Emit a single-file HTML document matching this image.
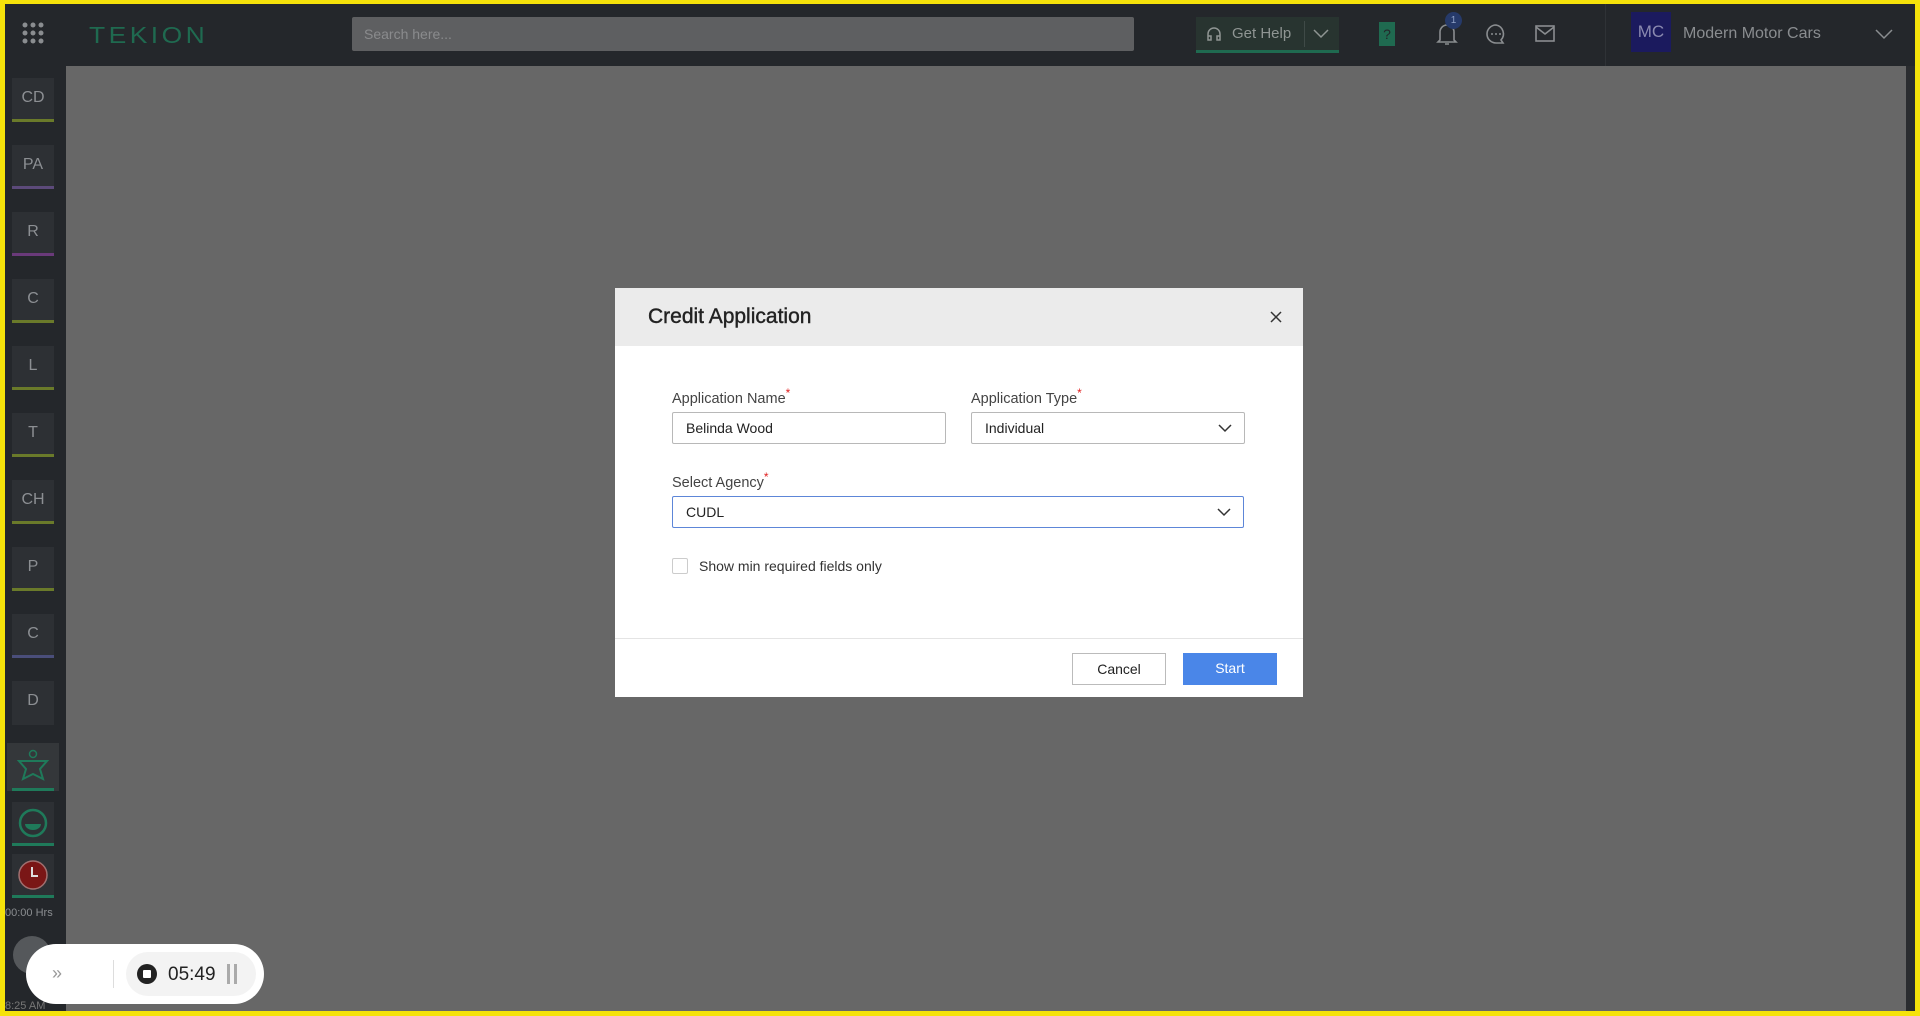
<!DOCTYPE html>
<html><head><meta charset="utf-8"><style>
*{box-sizing:border-box;margin:0;padding:0}
body{width:1920px;height:1016px;overflow:hidden;background:#f5e20a;font-family:"Liberation Sans",sans-serif;position:relative}
#app{position:absolute;left:5px;top:4px;right:5px;bottom:5px;background:#676767;overflow:hidden}
#top{position:absolute;left:0;top:0;right:0;height:62px;background:#24272b}
#side{position:absolute;left:0;top:62px;width:61px;bottom:0;background:#24272b}
.sb{position:absolute;left:7px;width:42px;height:44px;background:#2d3034;color:#8c8f93;font-size:16px;text-align:center;line-height:40px}
.sb i{position:absolute;left:0;right:0;bottom:0;height:3px}
#dlg{position:absolute;left:610px;top:284px;width:688px;height:409px;background:#fff}
#hd{height:58px;background:#ebebeb;padding-left:33px;font-size:21px;line-height:58px;color:#222;-webkit-text-stroke:0.4px #222}
.lbl{position:absolute;font-size:14px;color:#444}
.lbl b{color:#e02020;font-weight:normal;position:relative;top:-6px;font-size:12px}
.inp{position:absolute;height:32px;border:1px solid #b8b8b8;border-radius:2px;font-size:14px;color:#222;line-height:30px;padding-left:13px}
.chev{position:absolute;right:12px;top:10px}
.btn{position:absolute;height:32px;font-size:14px;text-align:center;line-height:30px}
</style></head><body>
<div id="app">
<div id="top">
 <svg style="position:absolute;left:17px;top:18px" width="22" height="22"><g fill="#8a8d90"><circle cx="3" cy="3" r="2.5"/><circle cx="11" cy="3" r="2.5"/><circle cx="19" cy="3" r="2.5"/><circle cx="3" cy="11" r="2.5"/><circle cx="11" cy="11" r="2.5"/><circle cx="19" cy="11" r="2.5"/><circle cx="3" cy="19" r="2.5"/><circle cx="11" cy="19" r="2.5"/><circle cx="19" cy="19" r="2.5"/></g></svg>
 <div style="position:absolute;left:84px;top:18px;font-size:23px;color:#1f6a50;letter-spacing:3px;transform:scaleX(1.15);transform-origin:left">TEKION</div>
 <div style="position:absolute;left:347px;top:13px;width:782px;height:34px;background:#5e5f61;border-radius:2px;color:#8a8b8d;font-size:14px;line-height:34px;padding-left:12px">Search here...</div>
 <div style="position:absolute;left:1191px;top:13px;width:143px;height:36px;background:#283430;border-bottom:3px solid #1f6a50;color:#8f9593;font-size:15px;line-height:34px;padding-left:36px">Get Help<span style="position:absolute;left:108px;top:4px;width:1px;height:26px;background:#3f4a47"></span>
  <svg style="position:absolute;left:10px;top:9px" width="16" height="16"><path d="M2 10V8a6 6 0 0112 0v2M2 10h3v4H2zM11 10h3v4h-3z" fill="none" stroke="#8f9593" stroke-width="1.5"/></svg>
  <svg style="position:absolute;left:117px;top:11px" width="16" height="12"><path d="M1 2l7 7 7-7" fill="none" stroke="#8f9593" stroke-width="1.5"/></svg></div>
 <div style="position:absolute;left:1374px;top:18px;width:16px;height:24px;background:#1f6a50;color:#24272b;font-size:14px;text-align:center;line-height:24px">?</div>
 <svg style="position:absolute;left:1431px;top:17px" width="22" height="26"><path d="M4 19V11a7 7 0 0114 0v8l2 2H2zM9 23h4" fill="none" stroke="#8a8d90" stroke-width="1.6"/></svg>
 <div style="position:absolute;left:1440px;top:8px;width:17px;height:17px;border-radius:50%;background:#263a6a;color:#8ea0c6;font-size:10px;text-align:center;line-height:17px">1</div>
 <svg style="position:absolute;left:1480px;top:19px" width="22" height="22"><path d="M11 2a9 9 0 100 18h0 7l-2-3a9 9 0 00-5-15z" fill="none" stroke="#8a8d90" stroke-width="1.6"/><circle cx="7" cy="11" r="1" fill="#8a8d90"/><circle cx="11" cy="11" r="1" fill="#8a8d90"/><circle cx="15" cy="11" r="1" fill="#8a8d90"/></svg>
 <svg style="position:absolute;left:1530px;top:21px" width="20" height="18"><rect x="1" y="1" width="18" height="15" fill="none" stroke="#8a8d90" stroke-width="1.6"/><path d="M1 2l9 7 9-7" fill="none" stroke="#8a8d90" stroke-width="1.6"/></svg>
 <div style="position:absolute;left:1600px;top:0;width:1px;height:62px;background:#2f3236"></div>
 <div style="position:absolute;left:1626px;top:8px;width:40px;height:40px;background:#1b1a5e;color:#8b8ab0;font-size:17px;text-align:center;line-height:40px">MC</div>
 <div style="position:absolute;left:1678px;top:21px;font-size:16px;color:#8a8d90">Modern Motor Cars</div>
 <svg style="position:absolute;left:1870px;top:24px" width="18" height="12"><path d="M1 2l8 8 8-8" fill="none" stroke="#8a8d90" stroke-width="1.5"/></svg>
 <div style="position:absolute;right:0;top:0;width:8px;height:1016px;background:#24272b"></div>
</div>
<div style="position:absolute;right:0;top:62px;width:9px;bottom:0;background:#2a2c2f"></div>
<div id="side">
 <div class="sb" style="top:12px">CD<i style="background:#6a7a2a"></i></div>
 <div class="sb" style="top:79px">PA<i style="background:#5c4a7a"></i></div>
 <div class="sb" style="top:146px">R<i style="background:#6a3a7a"></i></div>
 <div class="sb" style="top:213px">C<i style="background:#6a7a2a"></i></div>
 <div class="sb" style="top:280px">L<i style="background:#6a7a2a"></i></div>
 <div class="sb" style="top:347px">T<i style="background:#6a7a2a"></i></div>
 <div class="sb" style="top:414px">CH<i style="background:#6a7a2a"></i></div>
 <div class="sb" style="top:481px">P<i style="background:#6a7a2a"></i></div>
 <div class="sb" style="top:548px">C<i style="background:#4a4e7a"></i></div>
 <div class="sb" style="top:615px">D</div>
 <div class="sb" style="top:677px;left:2px;width:52px;height:48px;background:#34373a"><svg width="36" height="36" style="margin-top:6px"><circle cx="18" cy="5" r="3.5" fill="none" stroke="#1f7a5a" stroke-width="1.5"/><path d="M4 12h28l-7 8 3 10-10-5-10 5 3-10z" fill="none" stroke="#1f7a5a" stroke-width="2"/></svg><i style="background:#1f7a5a;left:5px;right:5px"></i></div>
 <div class="sb" style="top:736px;height:44px"><svg width="32" height="32" style="margin-top:5px"><circle cx="16" cy="16" r="13" fill="none" stroke="#1f7a5a" stroke-width="2.5"/><path d="M8 17h16a8 6 0 01-16 0z" fill="#1f7a5a"/></svg><i style="background:#1f7a5a"></i></div>
 <div class="sb" style="top:788px;height:44px"><svg width="32" height="32" style="margin-top:5px"><circle cx="16" cy="16" r="14" fill="#7a1616" stroke="#a07070" stroke-width="1.5"/><path d="M15 8v9h6" fill="none" stroke="#ddd" stroke-width="2"/></svg><i style="background:#1f7a5a"></i></div>
 <div style="position:absolute;left:0;top:841px;font-size:11px;color:#8a8d90">00:00 Hrs</div>
 <div style="position:absolute;left:8px;top:870px;width:38px;height:38px;border-radius:50%;background:#55585b"></div>
 <div style="position:absolute;left:0;top:934px;font-size:11px;color:#777">8:25 AM</div>
</div>
<div id="dlg">
 <div id="hd">Credit Application<svg style="position:absolute;right:21px;top:23px" width="12" height="12"><path d="M1 1l10 10M11 1L1 11" stroke="#333" stroke-width="1.5"/></svg></div>
 <div class="lbl" style="left:57px;top:103px;font-size:14.5px">Application Name<b>*</b></div>
 <div class="inp" style="left:57px;top:124px;width:274px">Belinda Wood</div>
 <div class="lbl" style="left:356px;top:103px;font-size:14.5px">Application Type<b>*</b></div>
 <div class="inp" style="left:356px;top:124px;width:274px">Individual<svg class="chev" width="14" height="10"><path d="M1 2l6 6 6-6" fill="none" stroke="#333" stroke-width="1.5"/></svg></div>
 <div class="lbl" style="left:57px;top:187px;font-size:14.5px">Select Agency<b>*</b></div>
 <div class="inp" style="left:57px;top:208px;width:572px;border-color:#5d86d8">CUDL<svg class="chev" width="14" height="10"><path d="M1 2l6 6 6-6" fill="none" stroke="#333" stroke-width="1.5"/></svg></div>
 <div style="position:absolute;left:57px;top:270px;width:16px;height:16px;border:1px solid #ccc;border-radius:2px"></div>
 <div class="lbl" style="left:84px;top:270px;color:#333">Show min required fields only</div>
 <div style="position:absolute;left:0;right:0;top:350px;height:1px;background:#e4e4e4"></div>
 <div class="btn" style="left:457px;top:365px;width:94px;border:1px solid #bbb;color:#222">Cancel</div>
 <div class="btn" style="left:568px;top:365px;width:94px;background:#4a86e8;color:#fff">Start</div>
</div>
<div style="position:absolute;left:21px;top:940px;width:238px;height:60px;background:#fff;border-radius:30px">
 <div style="position:absolute;left:26px;top:19px;color:#999;font-size:18px">»</div>
 <div style="position:absolute;left:87px;top:16px;width:1px;height:28px;background:#ddd"></div>
 <div style="position:absolute;left:100px;top:8px;width:130px;height:44px;background:#f3f3f3;border-radius:22px"></div>
 <div style="position:absolute;left:111px;top:20px;width:20px;height:20px;border-radius:50%;background:#222"><div style="position:absolute;left:6px;top:6px;width:8px;height:8px;background:#fff;border-radius:1px"></div></div>
 <div style="position:absolute;left:142px;top:20px;font-size:19px;color:#222">05:49</div>
 <div style="position:absolute;left:201px;top:20px;width:3px;height:20px;background:#aaa"></div>
 <div style="position:absolute;left:208px;top:20px;width:3px;height:20px;background:#aaa"></div>
</div>
</div>
</body></html>
